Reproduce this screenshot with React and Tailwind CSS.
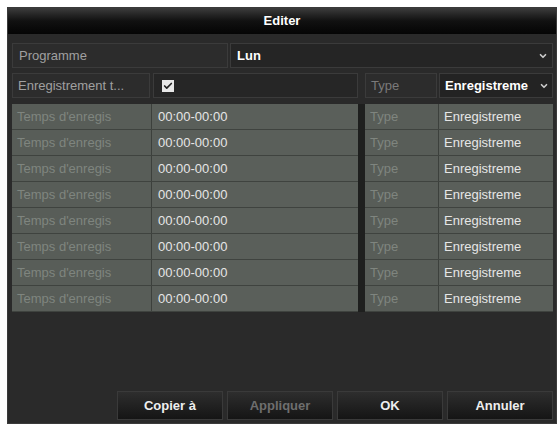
import { ChevronDown, Check } from 'lucide-react';

const rows = Array.from({ length: 8 }, () => ({
  label: "Temps d'enregis",
  time: '00:00-00:00',
  type: 'Type',
  mode: 'Enregistreme',
}));

const buttons = [
  { text: 'Copier à', disabled: false },
  { text: 'Appliquer', disabled: true },
  { text: 'OK', disabled: false },
  { text: 'Annuler', disabled: false },
];

export default function App() {
  return (
    <div className="w-[559px] h-[428px] bg-white pl-[7px] pt-[7px] pr-[2px] pb-[4px] font-['Liberation_Sans',Arial,sans-serif]">
      <div className="h-full flex flex-col bg-[#2a2a2a] border border-[#3a3a3a]">
        {/* title bar */}
        <div className="h-[26px] flex items-center justify-center bg-gradient-to-b from-[#3c3c3c] via-[#111111] to-[#050505] text-white text-[13px] font-bold">
          Editer
        </div>

        <div className="flex-1 flex flex-col pl-[4px] pr-[3px] pt-[9px]">
          {/* schedule day */}
          <div className="h-[25px] flex gap-[2px]">
            <div className="w-[216px] flex items-center px-[6px] bg-[#2c2c2c] border border-[#3b3b3b] text-[#a0a0a0] text-[13px]">
              Programme
            </div>
            <div className="flex-1 flex items-center justify-between pl-[6px] pr-[4px] bg-[#252525] border border-[#3b3b3b] text-white text-[13px] font-bold">
              <span>Lun</span>
              <ChevronDown className="w-[10px] h-[10px] text-[#cccccc]" strokeWidth={4} />
            </div>
          </div>

          {/* recording toggle */}
          <div className="h-[25px] mt-[5px] flex">
            <div className="w-[138px] flex items-center px-[5px] bg-[#2c2c2c] border border-[#3b3b3b] text-[#a0a0a0] text-[13px] whitespace-nowrap overflow-hidden">
              Enregistrement t...
            </div>
            <div className="w-[205px] ml-[3px] flex items-center pl-[8px] bg-[#262626] border border-[#3b3b3b]">
              <span className="w-[12px] h-[12px] bg-[#e8e8e8] flex items-center justify-center">
                <Check className="w-[10px] h-[10px] text-[#222222]" strokeWidth={4} />
              </span>
            </div>
            <div className="w-[72px] ml-[7px] flex items-center px-[5px] bg-[#2c2c2c] border border-[#3b3b3b] text-[#7a7a7a] text-[13px]">
              Type
            </div>
            <div className="flex-1 ml-[2px] flex items-center justify-between pl-[5px] pr-[3px] bg-[#232323] border border-[#3b3b3b] text-white text-[13px] font-bold whitespace-nowrap overflow-hidden">
              <span>Enregistreme</span>
              <ChevronDown className="w-[10px] h-[10px] shrink-0 text-[#cccccc]" strokeWidth={4} />
            </div>
          </div>

          {/* time periods */}
          <div className="mt-[6px] flex">
            <div className="w-[346px] flex flex-col bg-[#3c403c]">
              {rows.map((r, i) => (
                <div key={i} className="h-[26px] flex border-b border-[#3f433f]">
                  <div className="w-[139px] flex items-center px-[5px] bg-[#585d58] text-[#7f857f] text-[13px] whitespace-nowrap overflow-hidden">
                    {r.label}
                  </div>
                  <div className="flex-1 ml-[1px] flex items-center px-[6px] bg-[#5a5f5a] text-[#e6e6e6] text-[13px]">
                    {r.time}
                  </div>
                </div>
              ))}
            </div>
            <div className="w-[7px] bg-[#1e1f1e]" />
            <div className="flex-1 flex flex-col bg-[#3c403c]">
              {rows.map((r, i) => (
                <div key={i} className="h-[26px] flex border-b border-[#3f433f]">
                  <div className="w-[73px] flex items-center px-[5px] bg-[#585d58] text-[#7f857f] text-[13px]">
                    {r.type}
                  </div>
                  <div className="flex-1 ml-[1px] flex items-center px-[5px] bg-[#5a5f5a] text-[#e6e6e6] text-[13px] whitespace-nowrap overflow-hidden">
                    {r.mode}
                  </div>
                </div>
              ))}
            </div>
          </div>

          {/* action buttons */}
          <div className="mt-auto mb-[3px] flex justify-end gap-[4px]">
            {buttons.map((b) => (
              <div
                key={b.text}
                className={`w-[106px] h-[29px] flex items-center justify-center border border-[#3a3a3a] bg-gradient-to-b from-[#2e2e2e] to-[#151515] text-[13px] font-bold ${
                  b.disabled ? 'text-[#6e6e6e]' : 'text-[#eeeeee]'
                }`}
              >
                {b.text}
              </div>
            ))}
          </div>
        </div>
      </div>
    </div>
  );
}
